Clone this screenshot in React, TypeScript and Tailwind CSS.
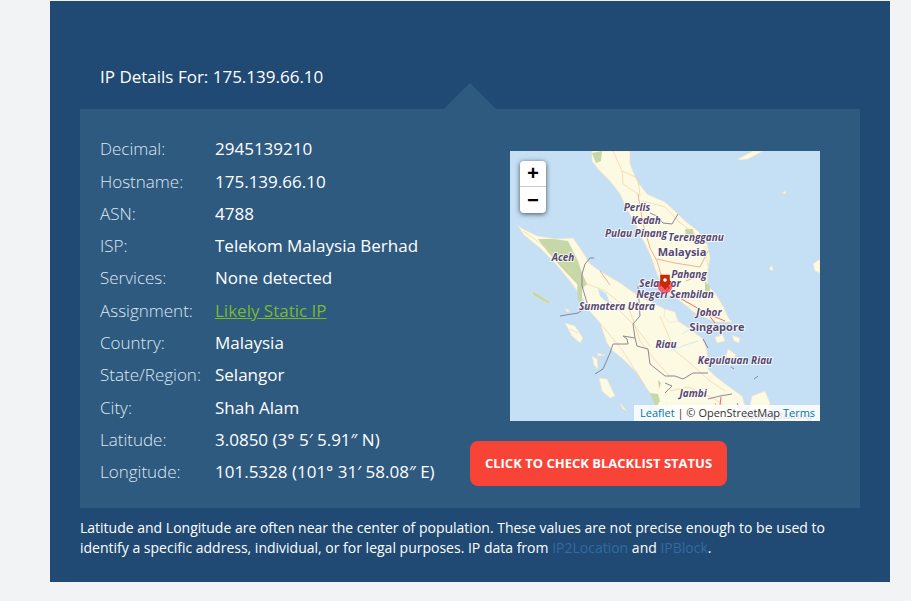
import React from 'react';

const rows: [string, string][] = [
  ['Decimal:', '2945139210'],
  ['Hostname:', '175.139.66.10'],
  ['ASN:', '4788'],
  ['ISP:', 'Telekom Malaysia Berhad'],
  ['Services:', 'None detected'],
  ['Assignment:', 'Likely Static IP'],
  ['Country:', 'Malaysia'],
  ['State/Region:', 'Selangor'],
  ['City:', 'Shah Alam'],
  ['Latitude:', '3.0850 (3° 5′ 5.91″ N)'],
  ['Longitude:', '101.5328 (101° 31′ 58.08″ E)'],
];

const labels: [string, number, number, number][] = [
  ['Perlis', 127, 60, 10],
  ['Kedah', 136, 73, 10],
  ['Pulau Pinang', 126, 86, 10],
  ['Terengganu', 186, 90, 10],
  ['Malaysia', 172, 105, 11],
  ['Pahang', 179, 127, 10],
  ['Aceh', 53, 110, 10],
  ['Selangor', 150, 136, 10],
  ['Negeri Sembilan', 165, 147, 10],
  ['Sumatera Utara', 107, 159, 10],
  ['Johor', 199, 165, 10],
  ['Singapore', 207, 180, 11],
  ['Riau', 156, 197, 10],
  ['Kepulauan Riau', 225, 213, 10],
  ['Jambi', 183, 246, 10],
  ['Bangka Belitung', 268, 268, 9],
];

const MapDrawing = () => (
  <svg viewBox="0 0 310 270" className="absolute inset-0 w-full h-full">
    <rect width="310" height="270" fill="#c5dff5" />
    {/* land */}
    <g fill="#fcfae3" stroke="#f5e3c4" strokeWidth="0.7">
      {/* peninsula */}
      <path d="M82 0L120 0L120 13L127 30L137 43L155 51L167 62L175 70L188 80L197 93L200 107L197 123L198 135L205 142L213 155L219 168L222 171L205 171L185 162L168 148L155 140L147 123L140 103L132 87L125 72L117 58L110 43L100 30L88 18L82 10Z" />
      {/* sumatra */}
      <path d="M8 75L13 78L27 85L47 88L63 87L72 100L80 113L90 120L110 132L130 146L153 157L165 168L180 178L193 188L197 200L198 218L205 225L218 235L232 245L235 255L242 270L152 270L147 250L137 238L127 222L113 208L103 200L97 192L90 172L78 158L73 148L60 130L45 112L30 97L14 84Z" />
      {/* islands */}
      <path d="M155 158L165 161L168 170L160 172L154 165Z" />
      <path d="M23 140L40 151L39 153L23 144Z" />
      <path d="M55 172L65 175L73 187L70 192L62 185Z" />
      <path d="M82 205L87 208L88 218L84 214Z" />
      <path d="M87 202L95 204L88 205Z" />
      <path d="M89 227L97 228L105 245L100 247L92 240Z" />
      <path d="M110 252L117 260L113 258Z" />
      <path d="M55 157L60 160L57 161Z" />
      <path d="M242 245L255 240L260 252L258 262L262 270L245 270L240 255Z" />
      <path d="M228 8L243 0L253 0L238 8L230 9Z" />
      <path d="M303 113L310 108L310 122L305 120Z" />
      <path d="M205 186L213 184L215 190L207 192Z" />
      <path d="M222 184L230 187L229 192L224 190Z" />
      <path d="M218 198L226 204L222 210L216 205Z" />
      <path d="M272 42L276 40L275 43Z" />
      <path d="M259 118L262 114L263 120Z" />
    </g>
    {/* forest */}
    <g fill="#c6d8a8">
      <path d="M28 88L43 88L58 90L68 110L72 122L77 133L70 140L67 133L50 115L37 100Z" />
      <path d="M67 135L72 137L72 152L68 150Z" />
      <path d="M82 2L92 0L91 10L86 12Z" />
      <path d="M175 78L183 78L184 85L176 85Z" />
      <path d="M195 130L200 135L199 148L195 145Z" />
      <path d="M140 242L148 243L150 250L146 256Z" />
      <path d="M148 229L151 232L149 238Z" />
      <path d="M23 140L40 151L39 153L23 144Z" />
    </g>
    {/* lake and rivers */}
    <g fill="#c5dff5">
      <path d="M88 138L96 142L100 152L95 150L90 145Z" />
    </g>
    <g fill="none" stroke="#d6e8f2" strokeWidth="1">
      <path d="M160 200L175 194L188 190" />
      <path d="M172 183L190 172" />
    </g>
    {/* minor roads */}
    <g fill="none" stroke="#f7cfa9" strokeWidth="0.7">
      <path d="M103 0L112 20L113 33L128 43" />
      <path d="M112 20L128 27L130 45" />
      <path d="M133 50L155 56L170 72" />
      <path d="M60 178L68 182" />
      <path d="M13 80L30 92L50 110L70 130L95 140L120 160L130 190L150 215L160 225" />
      <path d="M90 172L113 200L135 235" />
      <path d="M150 165L165 200L180 212L200 230L215 240" />
      <path d="M100 150L125 175L140 195" />
      <path d="M160 240L178 236L205 248L225 262" />
      <path d="M195 95L198 115" />
      <path d="M168 70L197 92" />
    </g>
    {/* main roads */}
    <g fill="none" stroke="#f4a58e" strokeWidth="0.9">
      <path d="M128 43L133 73L140 97L147 110L153 130" />
      <path d="M147 108L165 112L190 116L198 100" />
      <path d="M176 130L196 122" />
      <path d="M90 120L100 134" />
      <path d="M205 252L210 262" />
    </g>
    <g fill="none" stroke="#ee6a60" strokeWidth="1">
      <path d="M155 138L175 150L198 163L215 170" />
      <path d="M198 163L205 172" />
      <path d="M211 246L210 254" />
    </g>
    {/* borders */}
    <g fill="none" stroke="#85798f" strokeWidth="0.9">
      <path d="M140 62L147 65L153 72L162 73L168 63" />
      <path d="M50 165L68 162L78 155L72 135L72 123L75 113L80 107L84 107" />
      <path d="M85 223L93 218L100 202L103 193L118 193L117 188L113 185L125 187L127 195L138 198L140 213L155 225L165 225L173 228L183 222L198 222" />
      <path d="M128 135L130 165L123 173L125 187" />
      <path d="M155 232L162 235L155 242" />
      <path d="M198 248L210 245L222 243" />
      <path d="M193 188L198 197" />
      <path d="M227 252L231 259" />
      <path d="M221 216L224 218" />
      <path d="M244 228L248 225" />
    </g>
    {/* place names */}
    <g
      fontFamily="'Open Sans', sans-serif"
      fontStyle="italic"
      fontWeight="700"
      fill="#574870"
      stroke="#ffffff"
      strokeOpacity="0.75"
      strokeWidth="2"
      textAnchor="middle"
      style={{ paintOrder: 'stroke' }}
    >
      {labels.map(([t, x, y, s]) => (
        <text key={t} x={x} y={y} fontSize={s} fontStyle={s > 10 ? 'normal' : 'italic'}>
          {t}
        </text>
      ))}
    </g>
    {/* marker */}
    <circle cx="155" cy="135" r="7" fill="#ff2a3a" fillOpacity="0.7" stroke="#ff2a3a" strokeOpacity="0.4" strokeWidth="1" />
    <path d="M150.5 124H159.5V133L155 138.5L150.5 133Z" fill="#c92a00" stroke="#a82000" strokeWidth="0.5" />
    <circle cx="155" cy="129" r="1.8" fill="#fff" />
  </svg>
);

const App: React.FC = () => {
  return (
    <div className="min-h-[601px] bg-[#f2f3f5] pl-[50px] pr-[21px] pt-px pb-[19px] font-['Open_Sans',sans-serif] text-white">
      <div className="bg-[#204a74] h-[581px] px-[30px]">
        <h2 className="pt-[64px] pl-[20px] text-[17px] leading-[24px] font-normal h-[108px]">
          IP Details For: 175.139.66.10
        </h2>

        <div className="relative bg-[#2e5a80] flex h-[399px]">
          {/* Arrow */}
          <div className="absolute left-[364px] -top-[26px] w-0 h-0 border-l-[26px] border-r-[26px] border-b-[26px] border-l-transparent border-r-transparent border-b-[#2e5a80]"></div>

          <div className="w-[390px] pl-[20px] pt-[24px]">
            {rows.map(([label, value]) => (
              <div key={label} className="flex items-center h-[32.28px] text-[17px] whitespace-nowrap">
                <div className="w-[115px] font-light text-[#dfe8f0]">{label}</div>
                {label === 'Assignment:' ? (
                  <a className="text-[#7ab82e] underline font-normal">{value}</a>
                ) : (
                  <div>{value}</div>
                )}
              </div>
            ))}
          </div>

          <div className="w-[390px] pt-[42px]">
            <div className="relative w-[310px] h-[270px] mx-auto overflow-hidden">
              <MapDrawing />
              <div className="absolute left-[10px] top-[10px] w-[26px] h-[52px] bg-white rounded-[4px] shadow-[0_1px_5px_rgba(0,0,0,0.65)] text-black font-['Liberation_Mono',monospace] font-bold">
                <div className="h-[26px] flex items-center justify-center text-[20px] leading-none pt-[3px] border-b border-[#ccc]">+</div>
                <div className="h-[26px] flex items-center justify-center text-[20px] leading-none pt-[3px]">−</div>
              </div>
              <div className="absolute right-0 bottom-0 h-[16px] w-[186px] bg-white/85 text-[11px] leading-[16px] text-[#333] pl-[6px] whitespace-nowrap">
                <span className="text-[#0078a8]">Leaflet</span> | © OpenStreetMap <span className="text-[#0078a8]">Terms</span>
              </div>
            </div>
            <button className="block mt-[20px] w-[257px] h-[45px] rounded-[8px] bg-[#f84337] text-white text-[13px] font-bold uppercase text-center">
              Click to check blacklist status
            </button>
          </div>
        </div>

        <p className="mt-[10px] text-[14px] leading-[20px]">
          Latitude and Longitude are often near the center of population. These values are not precise enough to be used to identify a specific address, individual, or for legal purposes. IP data from{' '}
          <a className="text-[#2f6aa3]">IP2Location</a> and <a className="text-[#2f6aa3]">IPBlock</a>.
        </p>
      </div>
    </div>
  );
};

export default App;
